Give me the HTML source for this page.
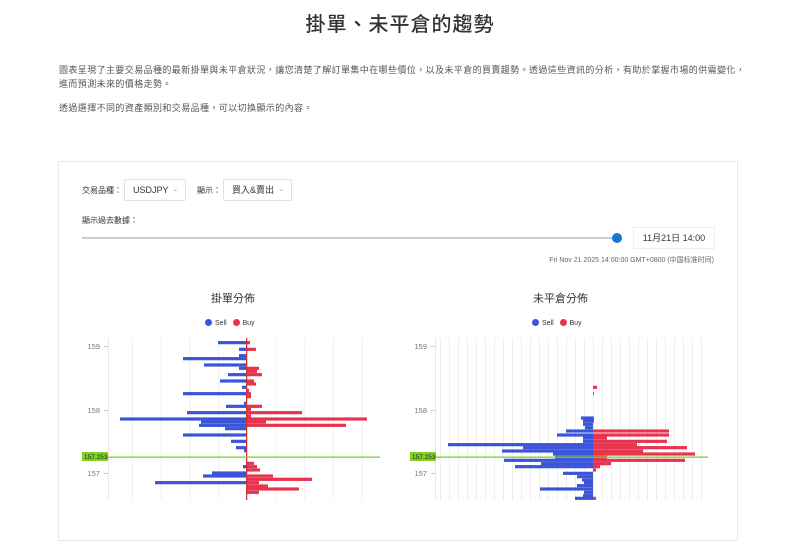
<!DOCTYPE html>
<html><head><meta charset="utf-8">
<style>
body{margin:0;background:#fff;font-family:"Liberation Sans","Noto Sans CJK TC",sans-serif;color:#333;width:800px;height:500px;overflow:hidden;position:relative}
h1{position:absolute;top:8px;left:0;width:800px;text-align:center;margin:0;font-size:20px;font-weight:500;color:#333;letter-spacing:1px}
.p{position:absolute;left:59px;font-size:9px;color:#555;line-height:14px;width:700px;white-space:nowrap;letter-spacing:0.4px}
.card{position:absolute;left:58px;top:161px;width:680px;height:380px;border:1px solid #e8e8e8;box-sizing:border-box}
.lab{position:absolute;font-size:8px;color:#333}
.sel{position:absolute;border:1px solid #e2e2e2;border-radius:2px;height:22px;box-sizing:border-box;font-size:9px;line-height:20px;padding-left:8px;color:#333}
.sel i{position:absolute;right:7px;top:0;font-style:normal;font-size:6px;color:#888}
.track{position:absolute;left:82px;top:237px;width:536px;height:2px;background:#ccc}
.knob{position:absolute;left:612px;top:233px;width:10px;height:10px;border-radius:50%;background:#1677d2}
.date{position:absolute;left:633px;top:227px;width:82px;height:22px;border:1px solid #eee;box-sizing:border-box;font-size:9px;text-align:center;line-height:20px}
.ts{position:absolute;right:86px;top:255px;font-size:7px;color:#666}
.ct{position:absolute;font-size:11px;color:#333;top:290px}
.lg{position:absolute;top:319px;font-size:7px;color:#333}
.dot{display:inline-block;width:7px;height:7px;border-radius:50%;vertical-align:-1px;margin-right:3px}
</style></head><body>
<h1>掛單、未平倉的趨勢</h1>
<div class="p" style="top:63px">圖表呈現了主要交易品種的最新掛單與未平倉狀況，讓您清楚了解訂單集中在哪些價位，以及未平倉的買賣趨勢。透過這些資訊的分析，有助於掌握市場的供需變化，<br>進而預測未來的價格走勢。</div>
<div class="p" style="top:101px">透過選擇不同的資產類別和交易品種，可以切換顯示的內容。</div>
<div class="card"></div>
<div class="lab" style="left:82px;top:185px">交易品種：</div>
<div class="sel" style="left:124px;top:179px;width:62px">USDJPY<i>⌄</i></div>
<div class="lab" style="left:197px;top:185px">顯示：</div>
<div class="sel" style="left:223px;top:179px;width:69px">買入&amp;賣出<i>⌄</i></div>
<div class="lab" style="left:82px;top:215px">顯示過去數據：</div>
<div class="track"></div><div class="knob"></div>
<div class="date">11月21日 14:00</div>
<div class="ts">Fri Nov 21 2025 14:00:00 GMT+0800 (中国标准时间)</div>
<div class="ct" style="left:211px">掛單分佈</div>
<div class="ct" style="left:533px">未平倉分佈</div>
<div class="lg" style="left:205px"><span class="dot" style="background:#3b55d9"></span>Sell &nbsp;&nbsp;<span class="dot" style="background:#e8344f"></span>Buy</div>
<div class="lg" style="left:532px"><span class="dot" style="background:#3b55d9"></span>Sell &nbsp;&nbsp;<span class="dot" style="background:#e8344f"></span>Buy</div>
<svg id="s" width="800" height="500" style="position:absolute;left:0;top:0" font-family="Liberation Sans, sans-serif"></svg>
<script>
var s=document.getElementById('s'),h='';
function r(x,y,w,hh,c){h+='<rect x="'+x+'" y="'+y+'" width="'+w+'" height="'+hh+'" fill="'+c+'"/>';}
for(var x=132;x<380;x+=28.7)r(x,338,1,162,'#f0f0f3');
r(108,338,1,162,'#e6e8ef');
for(var x=440;x<708;x+=9)r(x,338,1,162,'#eeeef2');
r(435,338,1,162,'#e6e8ef');
function ax(x,labs){labs.forEach(function(l){r(x-4,l[1],4,1,'#ccc');h+='<text x="'+(x-8)+'" y="'+(l[1]+3)+'" font-size="7.5" fill="#777" text-anchor="end">'+l[0]+'</text>';});}
ax(108,[['159',346],['158',410],['157',473]]);
ax(435,[['159',346],['158',410],['157',473]]);
var L=[[38,218,250],[58,239,256],[77,239,0],[86,183,0],[105,204,0],[115,239,259],[124,0,257],[134,228,262],[153,220,254],[162,0,256],[172,242,0],[181,0,249],[191,183,251],[200,0,251],[220,244,0],[229,226,262],[238,0,251],[248,187,302],[258,0,251],[267,120,367],[276,201,266],[286,199,346],[296,225,0],[315,183,0],[334,231,0],[353,236,0],[362,244,0],[400,0,254],[410,243,257],[420,0,260],[429,212,0],[438,203,273],[448,0,312],[458,155,259],[468,0,268],[477,0,299],[487,0,259]];
L.forEach(function(b){var y=b[0]/3+330-1.6;if(b[1])r(b[1],y,246-b[1],3.2,'#3b55d9');if(b[2])r(246,y,b[2]-246,3.2,'#e8344f');});
r(246,338,1.2,162,'#c33');
var R=[[172,0,597],[190,0,594],[264,581,594],[273,583,594],[283,583,0],[293,585,0],[303,566,669],[315,557,669],[324,583,607],[334,583,667],[344,448,637],[353,523,687],[363,502,643],[372,553,695],[382,555,607],[391,504,685],[401,541,611],[410,515,600],[420,0,596],[430,563,0],[440,577,0],[450,582,0],[458,584,0],[467,577,0],[477,540,0],[487,584,0],[497,583,0],[505,575,596]];
R.forEach(function(b){var y=b[0]/3+330-1.6;if(b[1])r(b[1],y,593-b[1],3.2,'#3b55d9');if(b[2])r(593,y,b[2]-593,3.2,'#e8344f');});
r(82,456.5,298,1.3,'#7ed321');r(82,452,26,9,'#7ed321');
h+='<text x="84" y="459" font-size="6.5" fill="#222">157.253</text>';
r(410,456.5,298,1.3,'#7ed321');r(410,452,26,9,'#7ed321');
h+='<text x="412" y="459" font-size="6.5" fill="#222">157.253</text>';
s.innerHTML=h;
</script>
</body></html>
